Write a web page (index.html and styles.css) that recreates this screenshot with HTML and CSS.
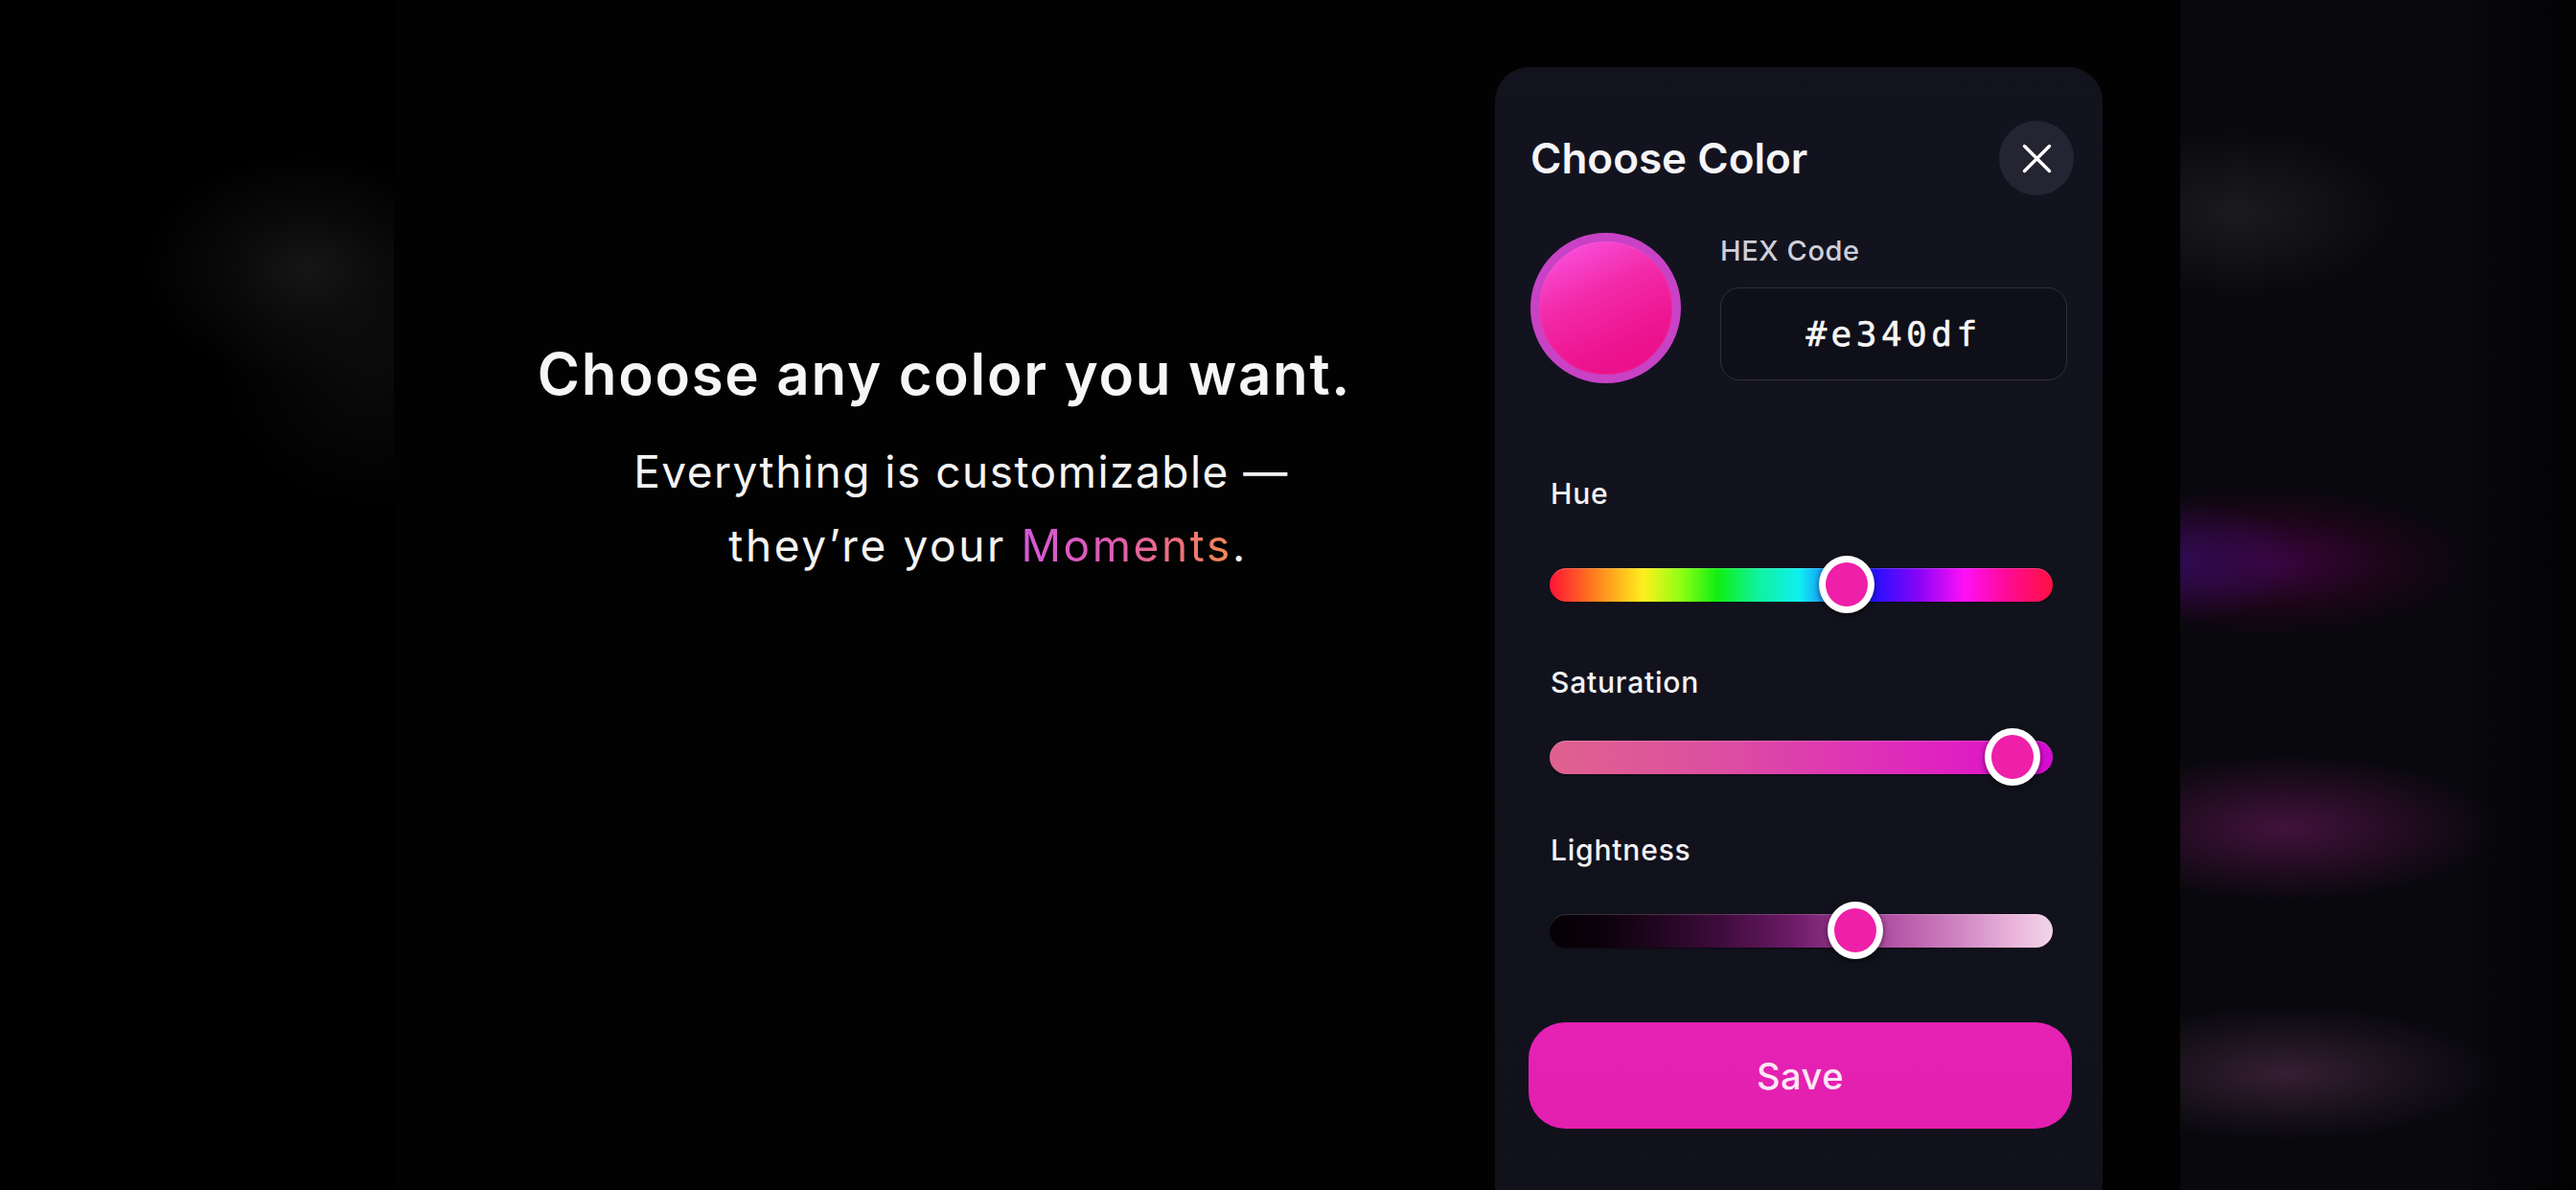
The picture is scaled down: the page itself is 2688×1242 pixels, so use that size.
FILE: index.html
```html
<!DOCTYPE html>
<html lang="en">
<head>
<meta charset="utf-8">
<title>Choose Color</title>
<link rel="stylesheet" href="styles.css">
</head>
<body>
<div class="stage">
  <aside class="side side-left"></aside>

  <main class="scene">
    <section class="intro">
      <h1 class="headline">Choose any color you want.</h1>
      <p class="subline">
        <span class="line line-first">Everything is customizable —</span>
        <span class="line line-second">they’re your <span class="moments">Moments</span>.</span>
      </p>
    </section>

    <div class="sheet">
      <header class="sheet-head">
        <h2 class="sheet-title">Choose Color</h2>
        <button class="close-btn" type="button" aria-label="Close">
          <svg width="31" height="31" viewBox="0 0 31 31" fill="none" stroke="#ffffff" stroke-width="3.4" stroke-linecap="round">
            <path d="M2.5 2.5 L28.5 28.5 M28.5 2.5 L2.5 28.5"/>
          </svg>
        </button>
      </header>

      <div class="pick-row">
        <div class="swatch"></div>
        <div class="hex-field">
          <label class="hex-label">HEX Code</label>
          <div class="hex-input">#e340df</div>
        </div>
      </div>

      <div class="sliders">
        <div class="slider slider-hue">
          <div class="slider-label">Hue</div>
          <div class="track-wrap">
            <div class="track track-hue"></div>
            <span class="thumb" style="left:59%"></span>
          </div>
        </div>
        <div class="slider slider-sat">
          <div class="slider-label">Saturation</div>
          <div class="track-wrap">
            <div class="track track-sat"></div>
            <span class="thumb" style="left:92%"></span>
          </div>
        </div>
        <div class="slider slider-light">
          <div class="slider-label">Lightness</div>
          <div class="track-wrap">
            <div class="track track-light"></div>
            <span class="thumb" style="left:60.8%"></span>
          </div>
        </div>
      </div>

      <button class="save-btn" type="button">Save</button>
    </div>
  </main>

  <aside class="side side-right"></aside>
</div>
</body>
</html>
```

FILE: styles.css
```css
* { box-sizing: border-box; }

html, body {
  margin: 0;
  padding: 0;
  background: #020202;
}

body {
  font-family: "Inter", "Noto Sans", "Liberation Sans", sans-serif;
  color: #f4f4f6;
}

.stage {
  display: flex;
  width: 2688px;
  height: 1242px;
  overflow: hidden;
}

/* blurred side panels */
.side { flex: none; height: 100%; }

.side-left {
  width: 411px;
  background:
    radial-gradient(ellipse 170px 120px at 320px 280px, rgba(24,24,24,0.9) 0%, rgba(18,18,18,0.55) 45%, rgba(0,0,0,0) 100%),
    radial-gradient(ellipse 160px 150px at 390px 380px, rgba(14,14,14,0.8) 0%, rgba(0,0,0,0) 100%),
    #000;
}

.side-right {
  width: 413px;
  background:
    radial-gradient(ellipse 170px 90px at 60px 222px, rgba(30,30,34,0.85) 0%, rgba(8,8,13,0) 100%),
    radial-gradient(ellipse 130px 64px at 0px 586px, rgba(48,10,82,1) 0%, rgba(8,8,13,0) 100%),
    radial-gradient(ellipse 220px 80px at 90px 586px, rgba(60,4,62,1) 0%, rgba(36,4,28,0.65) 60%, rgba(8,8,13,0) 100%),
    radial-gradient(ellipse 220px 78px at 110px 864px, rgba(66,18,60,1) 0%, rgba(48,14,44,0.65) 55%, rgba(8,8,13,0) 100%),
    radial-gradient(ellipse 220px 72px at 110px 1120px, rgba(54,30,52,1) 0%, rgba(36,24,36,0.65) 55%, rgba(8,8,13,0) 100%),
    linear-gradient(90deg, #08080d 0%, #08080d 72%, #050508 88%, #020203 100%);
}

/* centre area */
.scene {
  flex: 1;
  display: flex;
  align-items: flex-start;
  background: #020202;
}

.intro {
  flex: 1;
  padding-top: 355px;
  text-align: center;
}

.headline {
  margin: 0;
  font-size: 60px;
  line-height: 70px;
  font-weight: 600;
  letter-spacing: 1.7px;
  color: #f6f6f6;
}

.subline {
  margin: 29px 0 0;
  font-size: 46px;
  line-height: 77px;
  font-weight: 400;
  letter-spacing: 1.5px;
  color: #f4f4f4;
}

.line { display: block; }
.line-first { padding-left: 35px; }
.line-second { padding-left: 91px; letter-spacing: 2.6px; }

.moments {
  background: linear-gradient(90deg, #d558d8 0%, #e05cb0 45%, #ee7078 75%, #f48a52 100%);
  -webkit-background-clip: text;
  background-clip: text;
  color: transparent;
}

/* colour sheet */
.sheet {
  flex: none;
  width: 634px;
  height: 1220px;
  margin: 70px 81px 0 0;
  padding-top: 56px;
  border-radius: 36px;
  background: linear-gradient(180deg, #13131f 0%, #11111c 100%);
}

.sheet-head {
  display: flex;
  align-items: center;
  justify-content: space-between;
  padding: 0 30px 0 37px;
}

.sheet-title {
  margin: 0;
  font-size: 44px;
  line-height: 54px;
  font-weight: 600;
  color: #f5f5f7;
}

.close-btn {
  width: 78px;
  height: 78px;
  border: 0;
  padding: 0;
  border-radius: 50%;
  background: #252432;
  display: flex;
  align-items: center;
  justify-content: center;
}

.pick-row {
  display: flex;
  gap: 41px;
  padding: 0 37px;
  margin-top: 39px;
}

.swatch {
  flex: none;
  width: 157px;
  height: 157px;
  border-radius: 50%;
  border: 9px solid #c842c6;
  background: linear-gradient(155deg, #fb58e8 0%, #f22aa8 40%, #ee1592 70%, #e80c84 100%);
  box-shadow: inset 0 0 0 1px rgba(255,255,255,0.08);
}

.hex-field {
  flex: 1;
  padding-top: 2px;
}

.hex-label {
  display: block;
  font-size: 29px;
  line-height: 34px;
  font-weight: 500;
  letter-spacing: 0.6px;
  color: #cfcfd8;
}

.hex-input {
  margin-top: 21px;
  height: 97px;
  border: 1.5px solid #302f3c;
  border-radius: 20px;
  background: #0f0f19;
  display: flex;
  align-items: center;
  justify-content: center;
  font-family: "DejaVu Sans Mono", "Liberation Mono", monospace;
  font-size: 36px;
  letter-spacing: 4.5px;
  color: #f6f6f6;
  -webkit-text-stroke: 0.6px #f6f6f6;
}

/* sliders */
.sliders {
  padding: 0 52px 0 57px;
  margin-top: 98px;
}

.slider-label {
  font-size: 30px;
  line-height: 34px;
  font-weight: 500;
  letter-spacing: 0.8px;
  color: #f2f2f4;
  padding-left: 1px;
}

.track-wrap {
  position: relative;
  height: 60px;
  display: flex;
  align-items: center;
}

.slider-hue .track-wrap { margin-top: 48px; }
.slider-sat { margin-top: 55px; }
.slider-sat .track-wrap { margin-top: 31px; }
.slider-light { margin-top: 50px; }
.slider-light .track-wrap { margin-top: 37px; }

.track {
  width: 100%;
  height: 35px;
  border-radius: 18px;
  box-shadow: inset 0 1px 0 rgba(255,255,255,0.18), 0 1px 2px rgba(0,0,0,0.5);
}

.track-hue {
  background: linear-gradient(90deg,
    #ff1236 0%, #ff7a1e 8.6%, #ffef1e 18.6%, #90ff14 26%, #10ee12 33.4%,
    #10f2a0 41.5%, #10f0f0 49.5%, #1e60ff 58%, #2810ff 64.7%, #8a04f6 73.5%,
    #ff10f6 82.4%, #ff0a94 91.2%, #ff1040 100%);
}

.track-sat {
  background: linear-gradient(90deg, #e0628e 0%, #dc4ea2 35%, #de30b8 65%, #e018c6 88%, #d50cd2 100%);
}

.track-light {
  background: linear-gradient(90deg,
    #040004 0%, #0c010b 10%, #220620 22%, #3e0c3c 34%, #6c1a66 48%,
    #9a3a90 60%, #b85aa8 70%, #d088c4 82%, #e8b4da 92%, #f2d4ea 100%);
}

.thumb {
  position: absolute;
  top: 50%;
  width: 58px;
  height: 60px;
  border-radius: 50%;
  border: 7px solid #ffffff;
  background: #ee1fa8;
  transform: translate(-50%, -50%);
  box-shadow: 0 2px 6px rgba(0,0,0,0.55);
}

/* save */
.save-btn {
  display: flex;
  align-items: center;
  justify-content: center;
  width: 567px;
  height: 111px;
  margin: 66px 0 0 35px;
  border: 0;
  border-radius: 38px;
  background: linear-gradient(180deg, #e522b4 0%, #e31faf 100%);
  font-family: "Inter", "Noto Sans", sans-serif;
  font-size: 38px;
  font-weight: 500;
  letter-spacing: 0.5px;
  color: #fde8f6;
}
```
